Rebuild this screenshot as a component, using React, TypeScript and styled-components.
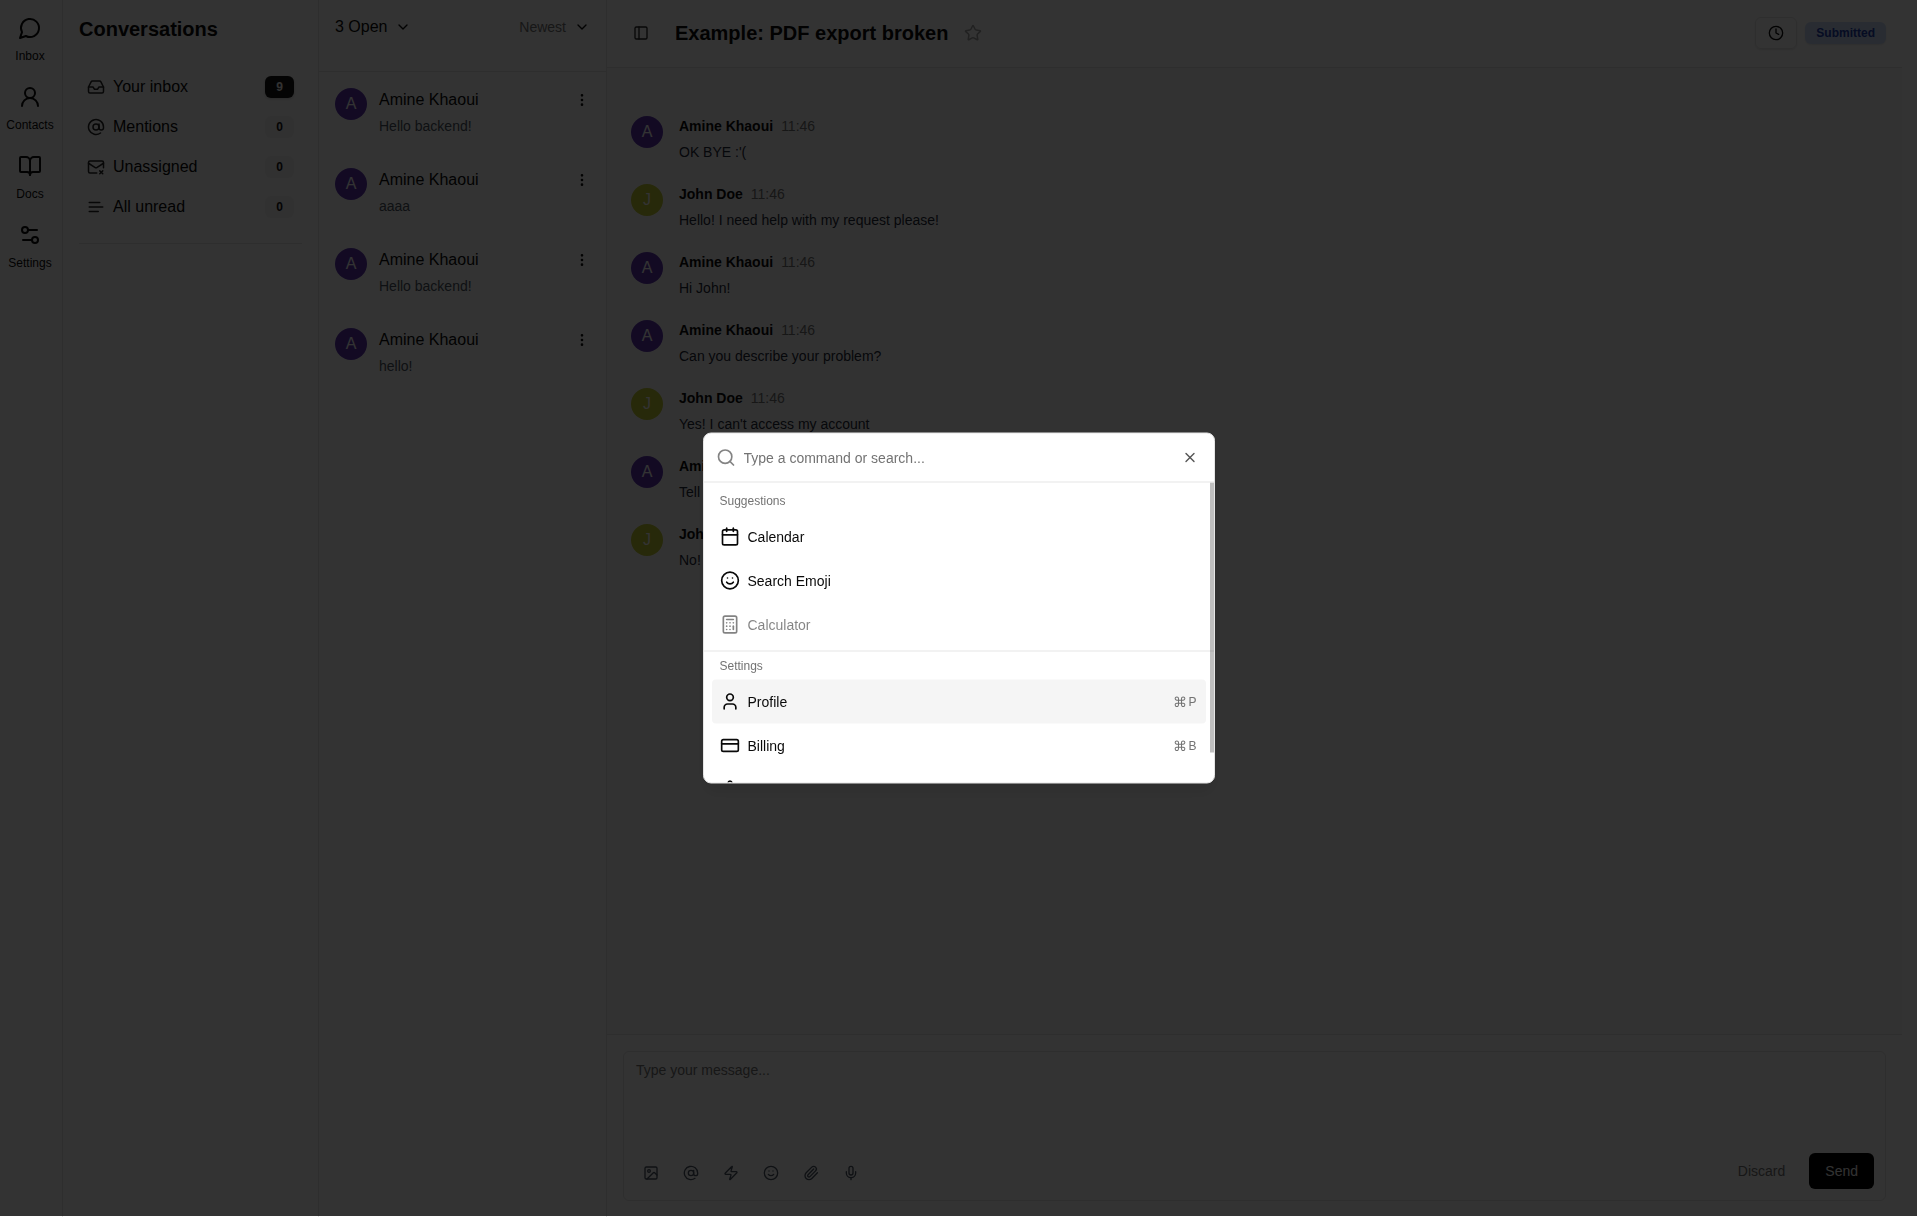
import React from 'react';
import styled, { createGlobalStyle } from 'styled-components';
import {
  UserRound,
  BookOpen,
  Settings2,
  Inbox,
  AtSign,
  MailX,
  ChevronDown,
  EllipsisVertical,
  PanelLeft,
  Star,
  Clock,
  Image,
  Zap,
  Smile,
  Paperclip,
  Mic,
  Search,
  X,
  Calendar,
  Calculator,
  CreditCard,
  User,
  Settings,
} from 'lucide-react';

const GlobalStyle = createGlobalStyle`
  *, *::before, *::after { box-sizing: border-box; }
  body {
    margin: 0;
    background: #fff;
    color: #0a0a0a;
    font-family: "Liberation Sans", Arial, sans-serif;
    font-size: 16px;
    line-height: 24px;
  }
  h1, h2, p, ul { margin: 0; padding: 0; }
  ul { list-style: none; }
  button, input, textarea { font: inherit; color: inherit; }
  button { border: 0; padding: 0; background: none; cursor: pointer; }
  a { color: inherit; text-decoration: none; }
  svg { display: block; flex-shrink: 0; }
`;

const LINE = '#e5e5e5';
const MUTED = '#737373';

const Shell = styled.div`
  display: flex;
  height: 100vh;
  padding-right: 15px;
  overflow: hidden;
`;

const Rail = styled.nav`
  display: flex;
  flex-direction: column;
  gap: 9px;
  width: 63px;
  padding: 16px 2px 0 0;
  border-right: 1px solid ${LINE};
`;

const RailLink = styled.a`
  display: flex;
  flex-direction: column;
  align-items: center;
  gap: 8px;
  height: 60px;
  font-size: 12px;
  line-height: 16px;
`;

const Sidebar = styled.aside`
  width: 256px;
  padding: 15px 16px 0;
  border-right: 1px solid ${LINE};
`;

const SidebarTitle = styled.h2`
  font-size: 20px;
  line-height: 28px;
  font-weight: 700;
`;

const FolderList = styled.ul`
  margin-top: 24px;
  padding-bottom: 16px;
  border-bottom: 1px solid ${LINE};
`;

const FolderLink = styled.a`
  display: flex;
  align-items: center;
  gap: 8px;
  height: 40px;
  padding: 0 8px;
  svg { color: #262626; }
`;

const Count = styled.span<{ $active?: boolean }>`
  margin-left: auto;
  padding: 3px 11px;
  border-radius: 6px;
  font-size: 12px;
  line-height: 16px;
  font-weight: 600;
  color: ${(p) => (p.$active ? '#fafafa' : '#171717')};
  background: ${(p) => (p.$active ? '#171717' : '#f5f5f5')};
  box-shadow: ${(p) => (p.$active ? '0 1px 3px rgba(0, 0, 0, 0.2)' : 'none')};
`;

const Threads = styled.section`
  width: 288px;
  border-right: 1px solid ${LINE};
`;

const ThreadsHeader = styled.header`
  display: flex;
  justify-content: space-between;
  align-items: flex-start;
  height: 72px;
  padding: 15px 16px 0;
  border-bottom: 1px solid ${LINE};
`;

const FilterButton = styled.button<{ $muted?: boolean }>`
  display: flex;
  align-items: center;
  gap: 8px;
  font-size: ${(p) => (p.$muted ? '14px' : '16px')};
  line-height: 24px;
  color: ${(p) => (p.$muted ? MUTED : '#0a0a0a')};
  svg { color: #0a0a0a; }
`;

const Thread = styled.li`
  display: flex;
  align-items: flex-start;
  gap: 12px;
  padding: 16px;
`;

const Avatar = styled.span<{ $tone: 'violet' | 'lime' }>`
  display: flex;
  flex-shrink: 0;
  align-items: center;
  justify-content: center;
  width: 32px;
  height: 32px;
  border-radius: 50%;
  color: #fff;
  background: ${(p) => (p.$tone === 'violet' ? '#5e35b1' : '#c0ca33')};
`;

const Stack = styled.div`
  display: flex;
  flex: 1;
  flex-direction: column;
  gap: 4px;
`;

const Preview = styled.p`
  font-size: 14px;
  line-height: 20px;
  color: #4b5563;
`;

const MoreButton = styled.button`
  padding-top: 4px;
`;

const Chat = styled.main`
  display: flex;
  flex: 1;
  flex-direction: column;
  min-width: 0;
`;

const ChatHeader = styled.header`
  display: flex;
  align-items: center;
  gap: 16px;
  height: 68px;
  padding: 0 16px 1px;
  border-bottom: 1px solid ${LINE};
`;

const ChatTitle = styled.h1`
  font-size: 20px;
  line-height: 28px;
  font-weight: 700;
`;

const SquareButton = styled.button<{ $size: number; $muted?: boolean }>`
  display: flex;
  align-items: center;
  justify-content: center;
  width: ${(p) => p.$size}px;
  height: ${(p) => p.$size}px;
  color: ${(p) => (p.$muted ? '#4b5563' : '#262626')};
`;

const StarButton = styled.button`
  color: #a3a3a3;
`;

const HeaderActions = styled.div`
  display: flex;
  align-items: center;
  gap: 8px;
  margin-left: auto;
`;

const OutlineButton = styled.button`
  height: 32px;
  padding: 0 12px;
  border: 1px solid ${LINE};
  border-radius: 6px;
  box-shadow: 0 1px 2px rgba(0, 0, 0, 0.1);
`;

const Status = styled.span`
  padding: 3px 11px;
  border-radius: 6px;
  font-size: 12px;
  line-height: 16px;
  font-weight: 600;
  color: #1e40af;
  background: #cbddfb;
  box-shadow: 0 1px 2px rgba(0, 0, 0, 0.1);
`;

const Messages = styled.ul`
  display: flex;
  flex: 1;
  flex-direction: column;
  gap: 20px;
  min-height: 0;
  padding: 48px 24px;
  background: #fafafa;
  overflow: hidden;
`;

const Message = styled.li`
  display: flex;
  gap: 16px;
`;

const Byline = styled.p`
  display: flex;
  gap: 8px;
  font-size: 14px;
  line-height: 20px;
  time { color: ${MUTED}; }
`;

const Body = styled.p`
  font-size: 14px;
  line-height: 24px;
  color: #1f2937;
`;

const ComposerArea = styled.footer`
  padding: 16px;
  border-top: 1px solid ${LINE};
`;

const Composer = styled.form`
  display: flex;
  flex-direction: column;
  height: 150px;
  border: 1px solid ${LINE};
  border-radius: 6px;
`;

const MessageBox = styled.textarea`
  flex: 1;
  width: 100%;
  padding: 8px 12px;
  border: 0;
  outline: 0;
  resize: none;
  background: transparent;
  font-size: 14px;
  line-height: 20px;
  &::placeholder { color: ${MUTED}; opacity: 1; }
`;

const ComposerBar = styled.div`
  display: flex;
  align-items: flex-end;
  gap: 8px;
  padding: 0 11px 11px;
`;

const TextButton = styled.button<{ $solid?: boolean }>`
  height: 36px;
  padding: 0 16px;
  border-radius: 6px;
  font-size: 14px;
  color: ${(p) => (p.$solid ? '#fafafa' : MUTED)};
  background: ${(p) => (p.$solid ? '#000' : 'transparent')};
`;

const Spacer = styled.span`
  flex: 1;
`;

const Overlay = styled.div`
  position: fixed;
  inset: 0 0 1px 0;
  background: rgba(0, 0, 0, 0.8);
`;

const Dialog = styled.div`
  position: absolute;
  top: 50%;
  left: 50%;
  width: 512px;
  transform: translate(-50%, -50%);
  border: 1px solid ${LINE};
  border-radius: 8px;
  background: #fff;
  overflow: hidden;
  box-shadow: 0 10px 15px -3px rgba(0, 0, 0, 0.1);
`;

const SearchBar = styled.label`
  display: flex;
  align-items: center;
  gap: 8px;
  height: 49px;
  padding: 0 12px;
  border-bottom: 1px solid ${LINE};
  svg { opacity: 0.5; }
`;

const SearchInput = styled.input`
  flex: 1;
  height: 48px;
  padding: 0;
  border: 0;
  outline: 0;
  background: transparent;
  font-size: 14px;
  line-height: 20px;
  &::placeholder { color: ${MUTED}; opacity: 1; }
`;

const CloseButton = styled.button`
  position: absolute;
  top: 16px;
  right: 16px;
  opacity: 0.7;
`;

const Commands = styled.div`
  position: relative;
  height: 300px;
  overflow: hidden;
`;

const Group = styled.section<{ $first?: boolean }>`
  padding: ${(p) => (p.$first ? '4px 8px' : '0 8px 4px')};
  & + & { border-top: 1px solid ${LINE}; }
`;

const GroupHeading = styled.h2`
  padding: 6px 8px;
  font-size: 12px;
  line-height: 16px;
  font-weight: 500;
  color: ${MUTED};
`;

const Command = styled.button<{ $selected?: boolean }>`
  display: flex;
  align-items: center;
  gap: 8px;
  width: 100%;
  height: 44px;
  padding: 0 8px;
  border-radius: 4px;
  font-size: 14px;
  line-height: 20px;
  color: #0a0a0a;
  background: ${(p) => (p.$selected ? '#f5f5f5' : 'transparent')};
  &:disabled { color: #0a0a0a; opacity: 0.5; }
`;

const Shortcut = styled.kbd`
  display: flex;
  align-items: center;
  gap: 1px;
  margin-left: auto;
  padding-right: 1px;
  font-family: inherit;
  font-size: 12px;
  line-height: 16px;
  color: ${MUTED};
`;

const CommandSign = styled.span`
  font-size: 14px;
`;

const ScrollThumb = styled.span`
  position: absolute;
  top: 0;
  right: 0;
  width: 4px;
  height: 270px;
  background: rgba(0, 0, 0, 0.25);
`;

function Glyph({ size, children }: { size: number; children: React.ReactNode }) {
  return (
    <svg
      width={size}
      height={size}
      viewBox="0 0 24 24"
      fill="none"
      stroke="currentColor"
      strokeWidth={2}
      strokeLinecap="round"
      strokeLinejoin="round"
      aria-hidden="true"
    >
      {children}
    </svg>
  );
}

const Bubble = ({ size }: { size: number }) => (
  <Glyph size={size}>
    <path d="M7.9 20A9 9 0 1 0 4 16.1L2 22Z" />
  </Glyph>
);

const Lines = ({ size }: { size: number }) => (
  <Glyph size={size}>
    <path d="M3 6h14M3 12h18M3 18h12" />
  </Glyph>
);

type IconType = React.ComponentType<{ size: number }>;

const rail: { label: string; icon: IconType }[] = [
  { label: 'Inbox', icon: Bubble },
  { label: 'Contacts', icon: UserRound },
  { label: 'Docs', icon: BookOpen },
  { label: 'Settings', icon: Settings2 },
];

const folders: { label: string; icon: IconType; count: number }[] = [
  { label: 'Your inbox', icon: Inbox, count: 9 },
  { label: 'Mentions', icon: AtSign, count: 0 },
  { label: 'Unassigned', icon: MailX, count: 0 },
  { label: 'All unread', icon: Lines, count: 0 },
];

const threads = ['Hello backend!', 'aaaa', 'Hello backend!', 'hello!'];

const messages = [
  { author: 'Amine Khaoui', body: "OK BYE :'(" },
  { author: 'John Doe', body: 'Hello! I need help with my request please!' },
  { author: 'Amine Khaoui', body: 'Hi John!' },
  { author: 'Amine Khaoui', body: 'Can you describe your problem?' },
  { author: 'John Doe', body: "Yes! I can't access my account" },
  { author: 'Amine Khaoui', body: 'Tell me more' },
  { author: 'John Doe', body: 'No!' },
];

const tools: { label: string; icon: IconType }[] = [
  { label: 'Insert image', icon: Image },
  { label: 'Mention', icon: AtSign },
  { label: 'Shortcuts', icon: Zap },
  { label: 'Emoji', icon: Smile },
  { label: 'Attach file', icon: Paperclip },
  { label: 'Record audio', icon: Mic },
];

type Entry = { label: string; icon: IconType; keyName?: string; disabled?: boolean; selected?: boolean };

const groups: { title: string; entries: Entry[] }[] = [
  {
    title: 'Suggestions',
    entries: [
      { label: 'Calendar', icon: Calendar },
      { label: 'Search Emoji', icon: Smile },
      { label: 'Calculator', icon: Calculator, disabled: true },
    ],
  },
  {
    title: 'Settings',
    entries: [
      { label: 'Profile', icon: User, keyName: 'P', selected: true },
      { label: 'Billing', icon: CreditCard, keyName: 'B' },
      { label: 'Settings', icon: Settings, keyName: 'S' },
    ],
  },
];

function CommandPalette() {
  return (
    <Overlay>
      <Dialog role="dialog" aria-label="Command palette">
        <SearchBar>
          <Search size={20} />
          <SearchInput type="text" aria-label="Command" placeholder="Type a command or search..." />
        </SearchBar>
        <Commands>
          {groups.map((group, i) => (
            <Group key={group.title} $first={i === 0}>
              <GroupHeading>{group.title}</GroupHeading>
              {group.entries.map(({ label, icon: Icon, keyName, disabled, selected }) => (
                <Command key={label} type="button" disabled={disabled} $selected={selected}>
                  <Icon size={20} />
                  <span>{label}</span>
                  {keyName && (
                    <Shortcut>
                      <CommandSign>⌘</CommandSign>
                      <span>{keyName}</span>
                    </Shortcut>
                  )}
                </Command>
              ))}
            </Group>
          ))}
          <ScrollThumb />
        </Commands>
        <CloseButton type="button" aria-label="Close">
          <X size={16} />
        </CloseButton>
      </Dialog>
    </Overlay>
  );
}

export default function App() {
  return (
    <>
      <GlobalStyle />
      <Shell>
        <Rail aria-label="Main">
          {rail.map(({ label, icon: Icon }) => (
            <RailLink key={label} href="#">
              <Icon size={24} />
              {label}
            </RailLink>
          ))}
        </Rail>

        <Sidebar>
          <SidebarTitle>Conversations</SidebarTitle>
          <FolderList>
            {folders.map(({ label, icon: Icon, count }) => (
              <li key={label}>
                <FolderLink href="#">
                  <Icon size={18} />
                  {label}
                  <Count $active={count > 0}>{count}</Count>
                </FolderLink>
              </li>
            ))}
          </FolderList>
        </Sidebar>

        <Threads>
          <ThreadsHeader>
            <FilterButton type="button">
              3 Open
              <ChevronDown size={16} />
            </FilterButton>
            <FilterButton type="button" $muted>
              Newest
              <ChevronDown size={16} />
            </FilterButton>
          </ThreadsHeader>
          <ul>
            {threads.map((preview, i) => (
              <Thread key={i}>
                <Avatar $tone="violet">A</Avatar>
                <Stack>
                  <p>Amine Khaoui</p>
                  <Preview>{preview}</Preview>
                </Stack>
                <MoreButton type="button" aria-label="More">
                  <EllipsisVertical size={16} />
                </MoreButton>
              </Thread>
            ))}
          </ul>
        </Threads>

        <Chat>
          <ChatHeader>
            <SquareButton type="button" aria-label="Toggle panel" $size={36}>
              <PanelLeft size={16} />
            </SquareButton>
            <ChatTitle>Example: PDF export broken</ChatTitle>
            <StarButton type="button" aria-label="Star">
              <Star size={18} />
            </StarButton>
            <HeaderActions>
              <OutlineButton type="button" aria-label="Snooze">
                <Clock size={16} />
              </OutlineButton>
              <Status>Submitted</Status>
            </HeaderActions>
          </ChatHeader>

          <Messages>
            {messages.map(({ author, body }, i) => (
              <Message key={i}>
                <Avatar $tone={author[0] === 'A' ? 'violet' : 'lime'}>{author[0]}</Avatar>
                <Stack>
                  <Byline>
                    <strong>{author}</strong>
                    <time>11:46</time>
                  </Byline>
                  <Body>{body}</Body>
                </Stack>
              </Message>
            ))}
          </Messages>

          <ComposerArea>
            <Composer>
              <MessageBox aria-label="Message" placeholder="Type your message..." />
              <ComposerBar>
                {tools.map(({ label, icon: Icon }) => (
                  <SquareButton key={label} type="button" aria-label={label} $size={32} $muted>
                    <Icon size={16} />
                  </SquareButton>
                ))}
                <Spacer />
                <TextButton type="button">Discard</TextButton>
                <TextButton type="button" $solid>
                  Send
                </TextButton>
              </ComposerBar>
            </Composer>
          </ComposerArea>
        </Chat>
      </Shell>
      <CommandPalette />
    </>
  );
}
